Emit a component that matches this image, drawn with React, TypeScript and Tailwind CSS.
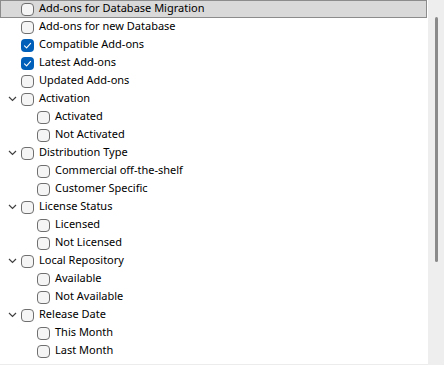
type Item = { label: string; checked?: boolean; children?: string[] }

const items: Item[] = [
  { label: "Add-ons for Database Migration" },
  { label: "Add-ons for new Database" },
  { label: "Compatible Add-ons", checked: true },
  { label: "Latest Add-ons", checked: true },
  { label: "Updated Add-ons" },
  { label: "Activation", children: ["Activated", "Not Activated"] },
  { label: "Distribution Type", children: ["Commercial off-the-shelf", "Customer Specific"] },
  { label: "License Status", children: ["Licensed", "Not Licensed"] },
  { label: "Local Repository", children: ["Available", "Not Available"] },
  { label: "Release Date", children: ["This Month", "Last Month"] },
]

function CheckBox({ checked }: { checked?: boolean }) {
  if (checked) {
    return (
      <span className="flex h-[13px] w-[13px] shrink-0 items-center justify-center rounded-[4px] bg-[#005fb8]">
        <svg width="9" height="9" viewBox="0 0 9 9" fill="none">
          <path d="M1.5 4.8 L3.6 6.8 L7.6 2.4" stroke="white" strokeWidth="1.1" strokeLinecap="round" strokeLinejoin="round" />
        </svg>
      </span>
    )
  }
  return <span className="h-[13px] w-[13px] shrink-0 rounded-[4px] border border-[#6f6f6f] bg-[#f5f5f5]" />
}

function Chevron() {
  return (
    <svg width="9" height="6" viewBox="0 0 9 6" fill="none">
      <path d="M1 1 L4.5 4.5 L8 1" stroke="#404040" strokeWidth="1.2" />
    </svg>
  )
}

function Row({ label, checked, level, expandable, selected }: { label: string; checked?: boolean; level: number; expandable?: boolean; selected?: boolean }) {
  return (
    <div
      className={`flex h-[18px] items-center ${selected ? "border border-[#8c8c8c] bg-[#d9d9d9]" : "border border-transparent"}`}
    >
      <span className="flex w-[20px] shrink-0 items-center justify-center pl-[2px]">{expandable && <Chevron />}</span>
      {level > 0 && <span className="w-[16px] shrink-0" />}
      <CheckBox checked={checked} />
      <span className="-mt-[1px] ml-[5px] whitespace-nowrap text-[11px] text-black">{label}</span>
    </div>
  )
}

export default function App() {
  return (
    <div className="flex h-[365px] w-[444px] bg-white font-['Segoe_UI','Noto_Sans',sans-serif]">
      <div className="flex w-[428px] flex-col border-b border-[#ececec]">
        <div className="w-[427px]">
          {items.map((item, i) => (
            <div key={item.label}>
              <Row label={item.label} checked={item.checked} level={0} expandable={!!item.children} selected={i === 0} />
              {item.children?.map((c) => <Row key={c} label={c} level={1} />)}
            </div>
          ))}
        </div>
      </div>
      <div className="w-[16px] bg-[#eeeeee] pl-[7px] pt-[17px]">
        <div className="h-[245px] w-[3px] rounded-full bg-[#8a8a8a]" />
      </div>
    </div>
  )
}
